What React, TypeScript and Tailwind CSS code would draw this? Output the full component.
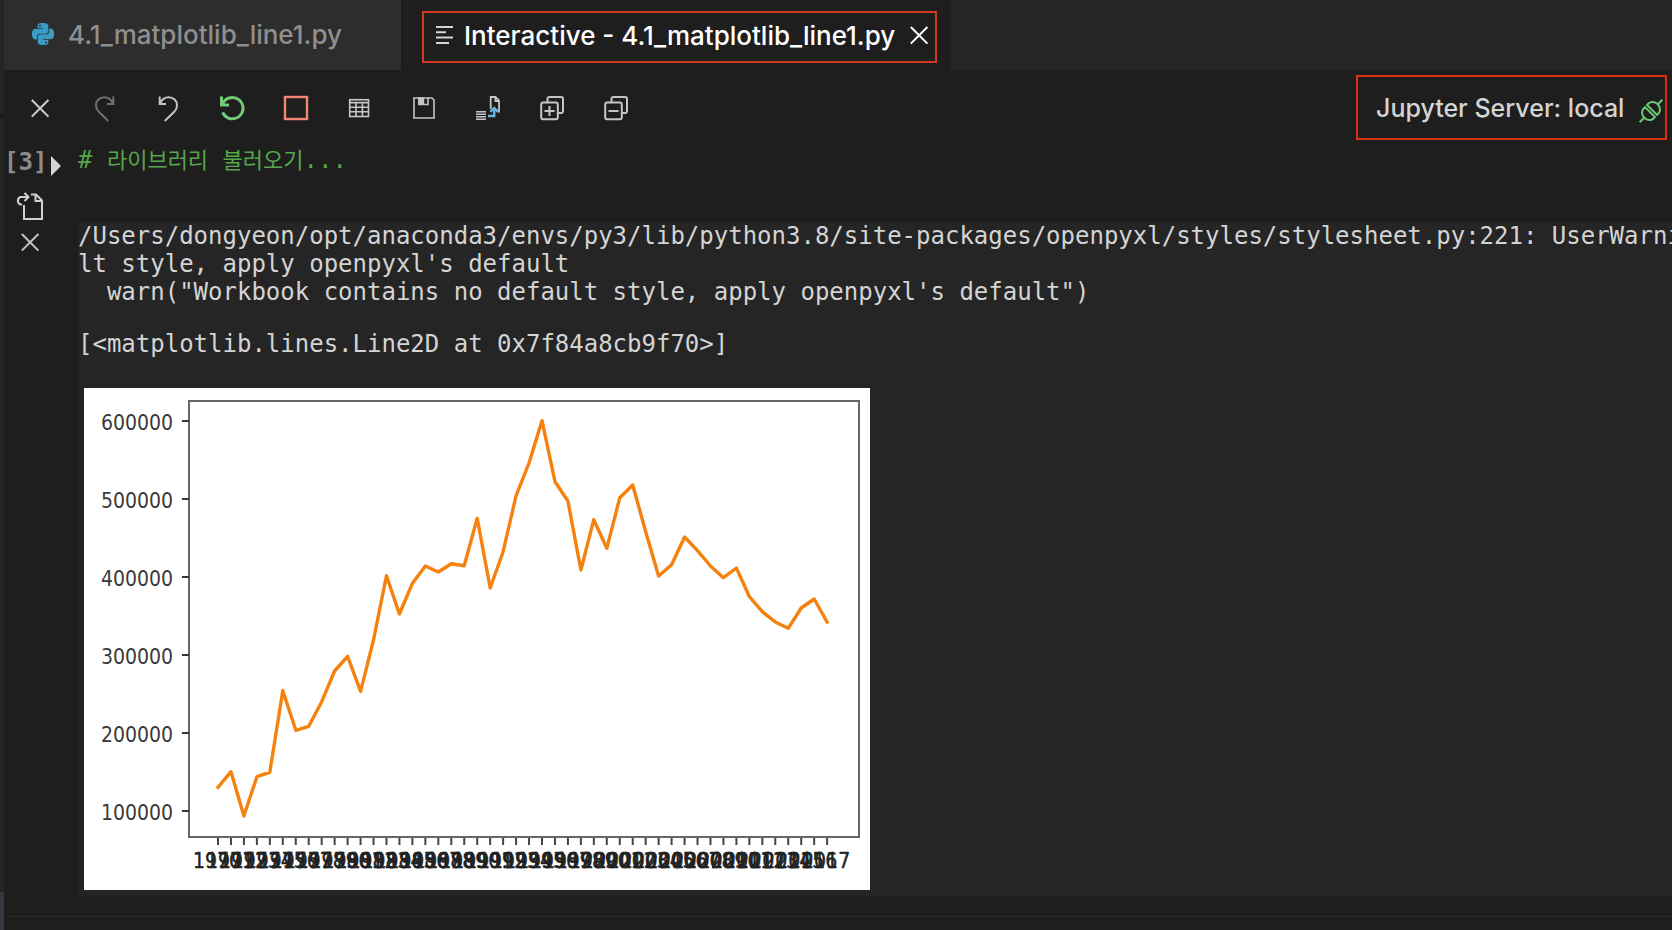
import type { ReactNode } from 'react';

const FIRST_YEAR = 1970;

// yearly totals, in thousands
const TOTALS = [
  130.4, 150.4, 93.6, 144, 149.6, 254.2, 203.5, 208.6, 240.1, 279.5, 298.3, 253.5,
  319.2, 401.7, 352.6, 391.9, 414.1, 406.4, 417.1, 414.5, 475.3, 385.9, 432.4, 504.2,
  546.2, 600.4, 522.2, 497.4, 409, 473.5, 436.8, 501.7, 517.9, 458.1, 401.3, 415.8,
  451.3, 433.7, 414.1, 399.1, 411.5, 374.7, 355.5, 342.3, 334.2, 360.3, 371.8, 342.3,
];

const Y_TICKS = [100, 200, 300, 400, 500, 600];

const xAt = (i: number) => 134 + i * 12.96;
const yAt = (v: number) => 501 - v * 0.78;

function Chart() {
  const points = TOTALS.map((v, i) => `${xAt(i).toFixed(1)},${yAt(v).toFixed(1)}`).join(' ');

  return (
    <svg
      width="786"
      height="502"
      viewBox="0 0 786 502"
      role="img"
      aria-label="Line chart"
      className="block bg-white font-['DejaVu_Sans_Condensed','DejaVu_Sans',sans-serif] text-[21px]"
    >
      <rect x="105" y="13" width="670" height="436" fill="none" stroke="#666" strokeWidth="2" />
      {Y_TICKS.map(v => (
        <g key={v}>
          <path d={`M98 ${yAt(v)}H105`} stroke="#333" strokeWidth="2" />
          <text x="89" y={yAt(v) + 9} textAnchor="end" fill="#3a3a3a">{v * 1000}</text>
        </g>
      ))}
      {TOTALS.map((_, i) => (
        <g key={i}>
          <path d={`M${xAt(i)} 450V457`} stroke="#444" strokeWidth="2" />
          <text x={xAt(i) - 1} y="480" textAnchor="middle" fill="#222" stroke="#222" strokeWidth="0.4">{FIRST_YEAR + i}</text>
        </g>
      ))}
      <polyline points={points} fill="none" stroke="#f5820f" strokeWidth="3.4" strokeLinecap="square" strokeLinejoin="round" />
    </svg>
  );
}

function Icon({ children, className = 'size-8' }: { children: ReactNode; className?: string }) {
  return (
    <svg viewBox="0 0 32 32" fill="none" stroke="currentColor" strokeWidth="2" className={className} aria-hidden="true">
      {children}
    </svg>
  );
}

const closeIcon = <path d="M7.8 8l16.6 16.6M24.4 8L7.8 24.6" />;

const tools = [
  { label: 'Close', color: 'text-[#d0d0d0]', icon: closeIcon },
  {
    label: 'Redo',
    color: 'text-[#707070]',
    icon: <path d="M25.3 4.5V12H19M25 11.5C23.2 7.4 20 5.2 16.4 5.2C11.4 5.2 8 8.7 8 13.4C8 16 9 18 11 20L20.3 29" />,
  },
  {
    label: 'Undo',
    color: 'text-[#c5c5c5]',
    icon: <path d="M7.7 4.5V12H14M8 11.5C9.8 7.4 13 5.2 16.6 5.2C21.6 5.2 25 8.7 25 13.4C25 16 24 18 22 20L12.7 29" />,
  },
  {
    label: 'Restart',
    color: 'text-[#73cc78]',
    icon: <path strokeWidth="3" d="M5.5 4.5V13H13M6.2 12.6C8 8 12 5.4 16.4 5.4A10.7 10.7 0 1 1 6.6 20.4" />,
  },
  { label: 'Interrupt', color: 'text-[#f48771]', icon: <rect x="5" y="5" width="22" height="22" strokeWidth="2.4" /> },
  {
    label: 'Variables',
    color: 'text-[#c5c5c5]',
    icon: (
      <g strokeWidth="1.6">
        <rect x="5.7" y="7.7" width="18.8" height="16.8" />
        <path d="M5.5 10.6H25M5.5 15.2H25M5.5 19.8H25M12 10V25M18.4 10V25" />
      </g>
    ),
  },
  {
    label: 'Save',
    color: 'text-[#c5c5c5]',
    icon: (
      <g strokeWidth="1.6">
        <path d="M6 6H24L26 8V26H6Z" />
        <path d="M11 5.5V12.5H20V5.5" />
        <path d="M11 6H15.4V12H11Z" fill="currentColor" />
      </g>
    ),
  },
  {
    label: 'Export',
    color: 'text-[#c5c5c5]',
    icon: (
      <g strokeWidth="1.4">
        <path d="M4 19.7H14M4 22.2H14M4 24.8H14M4 27.3H14" />
        <path strokeWidth="1.8" d="M18.7 17V5H23.6L27 8.6V20.5M23.4 5V9H27" />
        <path stroke="#6cb5e2" strokeWidth="2.4" d="M16 24H22.2V17M18.4 19.8L22.2 16L26 19.8" />
      </g>
    ),
  },
  {
    label: 'Expand all',
    color: 'text-[#c5c5c5]',
    icon: (
      <>
        <rect x="5.2" y="10.6" width="16.6" height="16.6" rx="2" />
        <path d="M11.5 10V7Q11.5 5 13.5 5H25Q27 5 27 7V19Q27 21 25 21H22M8.5 19H18.5M13.5 14V24" />
      </>
    ),
  },
  {
    label: 'Collapse all',
    color: 'text-[#c5c5c5]',
    icon: (
      <>
        <rect x="5.2" y="10.6" width="16.6" height="16.6" rx="2" />
        <path d="M11.5 10V7Q11.5 5 13.5 5H25Q27 5 27 7V19Q27 21 25 21H22M8.5 19H18.5" />
      </>
    ),
  },
];

function PythonLogo() {
  return (
    <svg viewBox="0 0 24 24" className="size-[22px]" fill="#3a9cc4" aria-hidden="true">
      <path d="M14.25.18l.9.2.73.26.59.3.45.32.34.34.25.34.16.33.1.3.04.26.02.2-.01.13V8.5l-.05.63-.13.55-.21.46-.26.38-.3.31-.33.25-.35.19-.35.14-.33.1-.3.07-.26.04-.21.02H8.77l-.69.05-.59.14-.5.22-.41.27-.33.32-.27.35-.2.36-.15.37-.1.35-.07.32-.04.27-.02.21v3.06H3.17l-.21-.03-.28-.07-.32-.12-.35-.18-.36-.26-.36-.36-.35-.46-.32-.59-.28-.73-.21-.88-.14-1.05-.05-1.23.06-1.22.16-1.04.24-.87.32-.71.36-.57.4-.44.42-.33.42-.24.4-.16.36-.1.32-.05.24-.01h.16l.06.01h8.16v-.83H6.18l-.01-2.75-.02-.37.05-.34.11-.31.17-.28.25-.26.31-.23.38-.2.44-.18.51-.15.58-.12.64-.1.71-.06.77-.04.84-.02 1.27.05zm-6.3 1.98l-.23.33-.08.41.08.41.23.34.33.22.41.09.41-.09.33-.22.23-.34.08-.41-.08-.41-.23-.33-.33-.22-.41-.09-.41.09z" />
      <path d="M21.1 6.11l.28.06.32.12.35.18.36.27.36.35.35.47.32.59.28.73.21.88.14 1.04.05 1.23-.06 1.23-.16 1.04-.24.86-.32.71-.36.57-.4.45-.42.33-.42.24-.4.16-.36.09-.32.05-.24.02-.16-.01h-8.22v.82h5.84l.01 2.76.02.36-.05.34-.11.31-.17.29-.25.25-.31.24-.38.2-.44.17-.51.15-.58.13-.64.09-.71.07-.77.04-.84.01-1.27-.04-1.07-.14-.9-.2-.73-.25-.59-.3-.45-.33-.34-.34-.25-.34-.16-.33-.1-.3-.04-.25-.02-.2.01-.13v-5.34l.05-.64.13-.54.21-.46.26-.38.3-.32.33-.24.35-.2.35-.14.33-.1.3-.06.26-.04.21-.02.13-.01h5.84l.69-.05.59-.14.5-.21.41-.28.33-.32.27-.35.2-.36.15-.36.1-.35.07-.32.04-.28.02-.21V6.07h2.09l.14.01zm-6.47 14.25l-.23.33-.08.41.08.41.23.33.33.23.41.08.41-.08.33-.23.23-.33.08-.41-.08-.41-.23-.33-.33-.23-.41-.08-.41.08z" />
    </svg>
  );
}

function TabBar() {
  return (
    <div role="tablist" className="flex h-[70px] bg-[#252526] text-[26px] font-medium">
      <button role="tab" aria-selected="false" className="flex w-[397px] items-center gap-[14px] bg-[#2d2d2d] pb-[2px] pl-7 text-[#8f8f8f]">
        <PythonLogo />
        4.1_matplotlib_line1.py
      </button>
      <div className="flex w-[549px] items-start bg-[#1e1e1e] pt-[11px] pl-[21px]">
        <div className="flex h-[52px] w-[515px] items-center border-2 border-[#d03a20] pb-1 pl-3 text-white">
          <button role="tab" aria-selected="true" className="flex grow items-center gap-[10px]">
            <svg viewBox="0 0 18 18" className="size-[18px]" stroke="#d4d4d4" strokeWidth="2" aria-hidden="true">
              <path d="M0 1H17M0 6.3H10M4 11.6H17M0 11.6H8M0 17H13" />
            </svg>
            Interactive - 4.1_matplotlib_line1.py
          </button>
          <button aria-label="Close tab">
            <Icon>{closeIcon}</Icon>
          </button>
        </div>
      </div>
    </div>
  );
}

function Toolbar() {
  return (
    <div className="flex h-[76px] items-start justify-between pr-[5px] pl-5">
      <div className="flex gap-8 pt-[22px]">
        {tools.map(t => (
          <button key={t.label} aria-label={t.label} className={t.color}>
            <Icon>{t.icon}</Icon>
          </button>
        ))}
      </div>
      <button className="mt-[5px] flex h-[65px] w-[311px] items-center justify-between border-2 border-[#dc3014] pt-[2px] pl-[18px] text-[25px] font-medium text-[#d4d4d4]">
        Jupyter Server: local
        <svg viewBox="0 0 28 28" className="mt-1 size-7" fill="none" stroke="#6cc774" strokeWidth="2" aria-hidden="true">
          <g transform="rotate(-45 14 14)">
            <path d="M-2 14H4M24 14H30M12.5 7H10.5A6 7 0 0 0 10.5 21H12.5ZM15.5 7H17.5A6 7 0 0 1 17.5 21H15.5Z" />
          </g>
        </svg>
      </button>
    </div>
  );
}

function Cell() {
  return (
    <section className="flex font-['DejaVu_Sans_Mono','Noto_Sans_CJK_KR',monospace] text-2xl leading-7">
      <div className="flex w-[74px] shrink-0 flex-col">
        <div className="flex h-8 items-center gap-1">
          <span className="font-bold text-[#8c8c8c]">[3]</span>
          <button aria-label="Toggle cell" className="pt-2">
            <svg viewBox="0 0 10 20" className="h-5 w-[10px]" fill="#d4d4d4" aria-hidden="true">
              <path d="M0 0L10 10L0 20Z" />
            </svg>
          </button>
        </div>
        <button aria-label="Go to code" className="mt-3 ml-[10px] w-8 text-[#d0d0d0]">
          <Icon>
            <path d="M10 15V29H28V10.5L22 4.5H17M21.5 4.5V11H28M8 14.5H6.5A4 4 0 0 1 6.5 7H14M10.5 3L14.5 7L10.5 11" />
          </Icon>
        </button>
        <button aria-label="Delete cell" className="mt-1 ml-[10px] w-8 text-[#c5c5c5]">
          <Icon>{closeIcon}</Icon>
        </button>
      </div>
      <div className="min-w-0 grow">
        <code className="block h-[76px] font-[inherit] text-[#57a64a]">
          # <span className="text-[22px]">라이브러리</span> <span className="text-[22px]">불러오기</span>...
        </code>
        <div className="overflow-hidden bg-[#252526] pb-[6px] text-[#d4d4d4]">
          <pre className="font-[inherit]">
            {`/Users/dongyeon/opt/anaconda3/envs/py3/lib/python3.8/site-packages/openpyxl/styles/stylesheet.py:221: UserWarning
lt style, apply openpyxl's default
  warn("Workbook contains no default style, apply openpyxl's default")`}
          </pre>
          <pre className="mt-6 mb-[30px] font-[inherit]">{'[<matplotlib.lines.Line2D at 0x7f84a8cb9f70>]'}</pre>
          <div className="pl-[6px]">
            <Chart />
          </div>
        </div>
      </div>
    </section>
  );
}

function App() {
  return (
    <div className="flex min-h-screen overflow-hidden bg-[#1e1e1e] font-['Inter','Noto_Sans_CJK_KR',sans-serif]">
      {/* edge of the neighbouring editor group */}
      <div className="flex w-1 shrink-0 flex-col bg-[#252526]">
        <div className="mt-[114px] h-[5px] bg-[#1b1b1b]" />
        <div className="mt-auto h-[38px] bg-[#383842]" />
      </div>
      <main className="flex min-w-0 grow flex-col">
        <TabBar />
        <Toolbar />
        <Cell />
        <div className="mt-5 border-t border-[#2a2a2a]" />
      </main>
    </div>
  );
}

export default App;
